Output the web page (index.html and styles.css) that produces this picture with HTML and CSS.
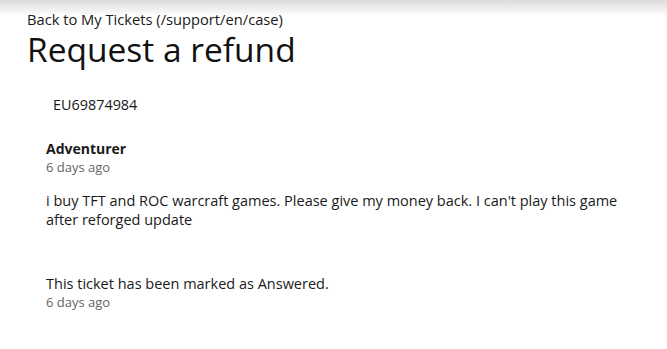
FILE: index.html
```html
<!DOCTYPE html>
<html>
<head>
<meta charset="utf-8">
<link rel="stylesheet" href="styles.css">
</head>
<body>
<div class="topshade"></div>
<main class="page">
  <a class="back">Back to My Tickets (/support/en/case)</a>
  <h1 class="title">Request a refund</h1>
  <div class="ticket-id">EU69874984</div>
  <section class="message">
    <div class="author">Adventurer</div>
    <div class="time">6 days ago</div>
    <p class="body">i buy TFT and ROC warcraft games. Please give my money back. I can't play this game after reforged update</p>
  </section>
  <section class="status">
    <div class="status-text">This ticket has been marked as Answered.</div>
    <div class="time">6 days ago</div>
  </section>
</main>
</body>
</html>
```
FILE: styles.css
```css
html, body {
  margin: 0;
  padding: 0;
  background: #fff;
}
body {
  font-family: "Open Sans", "Noto Sans", sans-serif;
  color: #1a1a1a;
  position: relative;
}
.topshade {
  position: absolute;
  left: 0; right: 0; top: 0;
  height: 16px;
  background: linear-gradient(#dadada, rgba(255,255,255,0));
}
.page {
  padding: 10px 0 0 27px;
  display: flex;
  flex-direction: column;
}
.back {
  font-size: 14.7px;
  line-height: 18px;
  color: #1a1a1a;
}
.title {
  margin: 1px 0 0;
  font-weight: 400;
  font-size: 33.5px;
  line-height: 40px;
  color: #111;
}
.ticket-id {
  margin: 26px 0 0 26px;
  font-size: 14.4px;
  line-height: 20px;
}
.message {
  margin: 24px 0 0 19px;
}
.author {
  font-weight: 700;
  font-size: 14px;
  line-height: 19px;
}
.time {
  font-size: 13px;
  line-height: 19px;
  color: #666;
}
.body {
  margin: 14px 0 0;
  font-size: 14.5px;
  line-height: 19px;
  max-width: 590px;
}
.status {
  margin: 45px 0 0 19px;
}
.status-text {
  font-size: 14.5px;
  line-height: 19px;
}
```
